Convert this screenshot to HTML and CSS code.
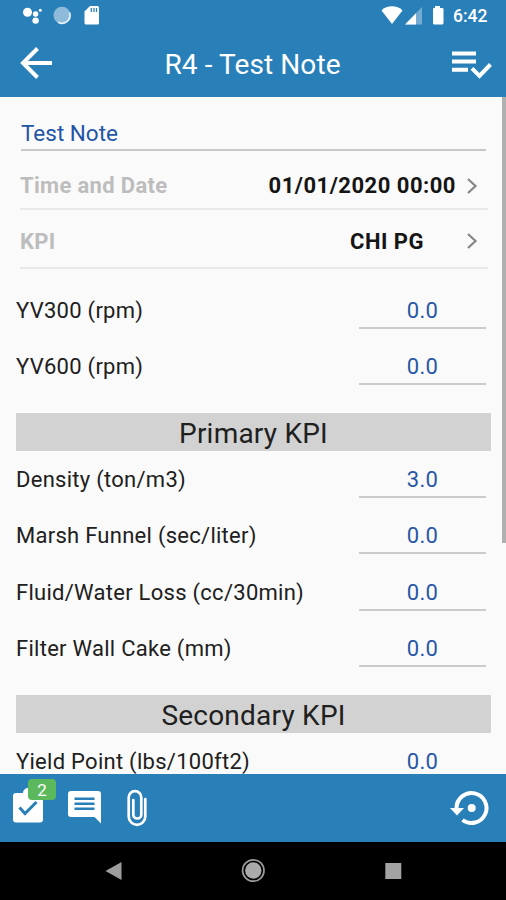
FILE: index.html
```html
<!DOCTYPE html>
<html lang="en">
<head>
<meta charset="utf-8">
<title>R4 - Test Note</title>
<link rel="stylesheet" href="styles.css">
</head>
<body>
<div class="phone">
  <header class="top">
    <div class="status">
      <svg class="status-left" width="110" height="32" viewBox="0 0 110 32">
        <g fill="#fff"><circle cx="27.5" cy="12.3" r="4.5"/><circle cx="35.6" cy="14" r="2.7"/><circle cx="40.3" cy="10.3" r="1.5"/><circle cx="35.6" cy="20.6" r="3.2"/></g>
        <circle cx="62" cy="15.3" r="8.5" fill="#8fbbda"/>
        <path d="M69.500 12.500a8 8 0 0 1-11.500 9.700" fill="none" stroke="#e7f1f8" stroke-width="1.7"/>
        <path d="M90 6h7.500a1.500 1.500 0 0 1 1.500 1.500v15.500a1.500 1.500 0 0 1-1.500 1.500h-11.500a1.500 1.500 0 0 1-1.500-1.500V11.500z" fill="#fff"/>
        <path d="M91.300 8v4M94 8v4M96.500 8v4" stroke="#2980b9" stroke-width="1.300"/>
      </svg>
      <svg class="status-right" width="70" height="32" viewBox="0 0 70 32">
        <path d="M1.500 10.500C4 7.500 8 6.200 12 6.200s8 1.300 10.500 4.300L12 24z" fill="#fff"/>
        <path d="M42 7v17.500H25z" fill="#73abd1"/><path d="M36 13.200v11.300H25z" fill="#fff"/>
        <path d="M55 6h5v2h2.200q1.300 0 1.300 1.300v13.700q0 1.500-1.500 1.500h-7.500q-1.500 0-1.500-1.500V9.300Q53 8 54.300 8H55z" fill="#fff"/>
      </svg>
      <span class="clock">6:42</span>
    </div>
    <div class="bar">
      <svg class="back" width="34" height="34" viewBox="0 0 34 34" fill="none" stroke="#fff" stroke-width="4"><path d="M33 17H4M18.500 2.500L4 17l14.500 14.500"/></svg>
      <h1>R4 - Test Note</h1>
      <svg width="40" height="30" viewBox="0 0 40 30" fill="none" stroke="#fff" stroke-width="4"><path d="M0 3.500h24M0 11.500h24M0 19.700h16M20 18.300l7.500 7.500L38.500 14.500"/></svg>
    </div>
  </header>
  <main>
    <div class="form">
      <div class="name"><span>Test Note</span></div>
      <div class="pick date"><b class="label">Time and Date</b><b class="value">01/01/2020 00:00</b><svg width="12" height="18" viewBox="0 0 12 18"><path d="M2 2l7.500 7L2 16"/></svg></div>
      <div class="pick kpi"><b class="label">KPI</b><b class="value">CHI PG</b><svg width="12" height="18" viewBox="0 0 12 18"><path d="M2 2l7.500 7L2 16"/></svg></div>
      <section class="first">
        <div class="row"><span>YV300 (rpm)</span><span class="num">0.0</span></div>
        <div class="row"><span>YV600 (rpm)</span><span class="num">0.0</span></div>
      </section>
      <h2>Primary KPI</h2>
      <section>
        <div class="row"><span>Density (ton/m3)</span><span class="num">3.0</span></div>
        <div class="row"><span>Marsh Funnel (sec/liter)</span><span class="num">0.0</span></div>
        <div class="row"><span>Fluid/Water Loss (cc/30min)</span><span class="num">0.0</span></div>
        <div class="row"><span>Filter Wall Cake (mm)</span><span class="num">0.0</span></div>
      </section>
      <h2>Secondary KPI</h2>
      <section>
        <div class="row"><span>Yield Point (lbs/100ft2)</span><span class="num">0.0</span></div>
      </section>
    </div>
    <div class="scroll"></div>
  </main>
  <footer class="tools">
    <div class="task">
      <svg width="30" height="35" viewBox="0 0 30 35"><path d="M3 5h7a5 5 0 0 1 10 0h7q3 0 3 3v23.500q0 3-3 3H3q-3 0-3-3V8q0-3 3-3z" fill="#fff"/><path d="M6.500 19.500l5.500 6L23.500 14" fill="none" stroke="#2980b9" stroke-width="3"/></svg>
      <span class="badge">2</span>
    </div>
    <svg class="chat" width="34" height="34" viewBox="0 0 34 34"><path d="M3 1h27q3 0 3 3v29.500l-6.500-6.500H3q-3 0-3-3V4q0-3 3-3z" fill="#fff"/><path d="M6.500 8.800h20M6.500 13.800h20M6.500 18.800h20" stroke="#2980b9" stroke-width="2.600"/></svg>
    <svg class="clip" width="20" height="38" viewBox="0 0 20 38" fill="none" stroke="#fff" stroke-width="2.700" stroke-linecap="round"><path d="M18.300 10v17.500a8.300 8.300 0 0 1-16.600 0V8.500a6.300 6.300 0 0 1 12.600 0v17a4 4 0 0 1-8 0V11"/></svg>
    <svg class="restore" width="40" height="36" viewBox="0 0 40 36"><path d="M6.500 18A15 15 0 1 1 12.500 30" fill="none" stroke="#fff" stroke-width="4"/><path d="M0 18h14l-7 7.500z" fill="#fff"/><circle cx="21.700" cy="18" r="4" fill="#fff"/></svg>
  </footer>
  <nav>
    <svg width="506" height="58" viewBox="0 0 506 58"><path d="M105.500 29L121.500 20v18z" fill="#9d9d9d"/><circle cx="253.300" cy="28.500" r="8.200" fill="#aaa"/><circle cx="253.300" cy="28.500" r="10.700" fill="none" stroke="#999" stroke-width="1.700"/><path d="M385.300 21h16v16h-16z" fill="#a2a2a2"/></svg>
  </nav>
</div>
</body>
</html>
```
FILE: styles.css
```css
* { box-sizing: border-box; }
body { margin: 0; font-family: Roboto, "Liberation Sans", sans-serif; background: #fafafa; color: #202020; }
svg { display: block; flex: none; }
.phone { width: 506px; height: 900px; display: flex; flex-direction: column; overflow: hidden; }
.top { height: 97px; background: #2980b9; color: #fff; flex: none; }
.status { height: 32px; display: flex; align-items: center; }
.status-right { margin-left: 270px; }
.clock { margin-left: 3px; font-size: 17.5px; font-weight: 500; line-height: 32px; }
.bar { height: 65px; display: flex; align-items: center; justify-content: space-between; padding: 0 14px 0 19px; }
.back { margin-bottom: 3px; }
h1 { margin: 0; font-size: 28px; font-weight: 400; line-height: 64px; letter-spacing: 0.1px; }
main { height: 677px; flex: none; display: flex; overflow: hidden; }
.form { width: 502px; padding: 0 11px 0 16px; }
.name { height: 54px; margin: 0 5px; padding-top: 23px; border-bottom: 2px solid #c8c8c8; font-size: 22.5px; line-height: 27px; color: #1f55a5; }
.pick { display: flex; align-items: center; margin: 0 3px 0 4px; border-bottom: 2px solid #e9e9e9; font-size: 22px; }
.date { height: 59px; padding-top: 12px; }
.kpi { height: 59px; padding-top: 5px; }
.label { color: #bdbdbd; letter-spacing: 0.33px; }
.value { margin-left: auto; color: #151515; letter-spacing: 0.5px; }
.date .value { margin-right: 10px; }
.kpi .value { margin-right: 42px; }
.pick svg { fill: none; stroke: #858585; stroke-width: 2.2; margin-right: 10px; }
.first { margin-top: 13px; }
.row { height: 56.3px; padding-right: 5px; display: flex; justify-content: space-between; font-size: 22px; line-height: 26px; letter-spacing: 0.27px; white-space: nowrap; }
.row > span { padding-top: 16px; }
.row > .num { width: 127px; height: 47px; text-align: center; color: #2857a5; border-bottom: 2px solid #cbcbcb; }
h2 { height: 38px; margin: 18.500px 0 0; background: #d2d2d2; text-align: center; font-size: 28px; font-weight: 400; line-height: 41px; letter-spacing: 0.22px; }
.scroll { width: 4px; height: 446px; background: #b0b0b0; }
.tools { height: 68px; flex: none; background: #2980b9; display: flex; padding-left: 13px; }
.task { position: relative; padding-top: 14px; }
.badge { position: absolute; left: 15px; top: 5px; width: 28px; height: 21px; border-radius: 4px; background: #5cb85c; color: #fff; font-size: 17px; line-height: 23px; text-align: center; }
.chat { margin: 16px 0 0 25px; }
.clip { margin: 15px 0 0 25px; }
.restore { margin: 16px 0 0 303px; }
nav { height: 58px; flex: none; background: #000; }
```
